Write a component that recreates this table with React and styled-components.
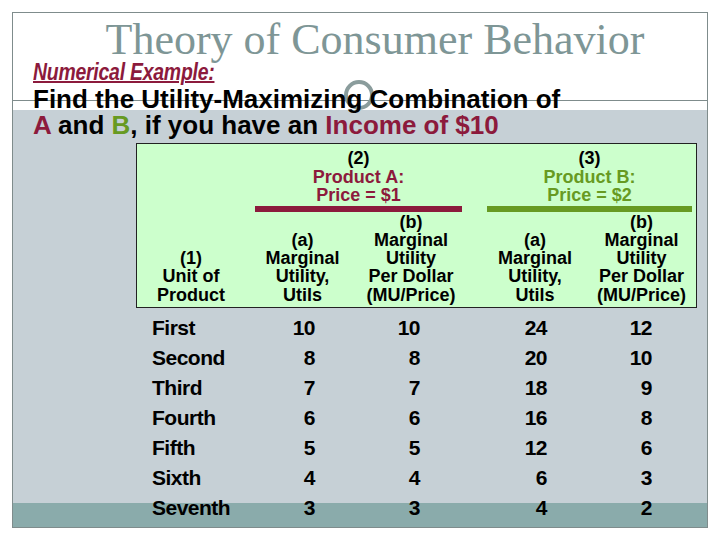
import styled, { createGlobalStyle } from 'styled-components';

const MAROON = '#8c1a3c';
const GREEN = '#679a22';

const rows = [
  ['First', 10, 10, 24, 12],
  ['Second', 8, 8, 20, 10],
  ['Third', 7, 7, 18, 9],
  ['Fourth', 6, 6, 16, 8],
  ['Fifth', 5, 5, 12, 6],
  ['Sixth', 4, 4, 6, 3],
  ['Seventh', 3, 3, 4, 2],
];

export default function App() {
  return (
    <>
      <Global />
      <Slide>
        <Ring />
        <Title>Theory of Consumer Behavior</Title>
        <HeadingRow>
          <Heading>Numerical Example:</Heading>
        </HeadingRow>
        <Intro>
          <Line>Find the Utility-Maximizing Combination of</Line>
          <Line>
            <Tint $color={MAROON}>A</Tint> and <Tint $color={GREEN}>B</Tint>, if you have an{' '}
            <Tint $color={MAROON}>Income of $10</Tint>
          </Line>
        </Intro>

        <Table>
          <HeaderBox>
            <UnitHead>
              (1)
              <br />
              Unit of
              <br />
              Product
            </UnitHead>
            <Group $col="2 / 4" $left={10} $right={0}>
              <span>(2)</span>
              <Tint $color={MAROON}>Product A:</Tint>
              <Tint $color={MAROON}>Price = $1</Tint>
              <Bar $color={MAROON} />
            </Group>
            <Group $col="5 / 7" $left={11} $right={-3}>
              <span>(3)</span>
              <Tint $color={GREEN}>Product B:</Tint>
              <Tint $color={GREEN}>Price = $2</Tint>
              <Bar $color={GREEN} />
            </Group>
            <ColHead $col={2}>
              (a)
              <br />
              Marginal
              <br />
              Utility,
              <br />
              Utils
            </ColHead>
            <ColHead $col={3}>
              (b)
              <br />
              Marginal
              <br />
              Utility
              <br />
              Per Dollar
              <br />
              (MU/Price)
            </ColHead>
            <ColHead $col={5}>
              (a)
              <br />
              Marginal
              <br />
              Utility,
              <br />
              Utils
            </ColHead>
            <ColHead $col={6}>
              (b)
              <br />
              Marginal
              <br />
              Utility
              <br />
              Per Dollar
              <br />
              (MU/Price)
            </ColHead>
          </HeaderBox>

          <Body>
            {rows.map(([label, ...nums]) => (
              <Row key={label}>
                <Label>{label}</Label>
                {nums.map((n, i) => (
                  <Num key={i}>{n}</Num>
                ))}
              </Row>
            ))}
          </Body>
        </Table>
      </Slide>
    </>
  );
}

const Global = createGlobalStyle`
  html, body {
    margin: 0;
    padding: 0;
    background: #fff;
  }
  body {
    font-family: "Liberation Sans", Arial, sans-serif;
  }
`;

const Slide = styled.div`
  position: relative;
  box-sizing: border-box;
  width: 696px;
  height: 516px;
  margin: 12px 0 0 12px;
  border: 1px solid #7f8c8c;
  overflow: hidden;
  background: linear-gradient(
    to bottom,
    #fff 0 87px,
    #7f8c8c 87px 88px,
    #fff 88px 97px,
    #c6d0d6 97px 490px,
    #8aabab 490px
  );
`;

const Ring = styled.div`
  position: absolute;
  left: 331px;
  top: 67px;
  width: 22px;
  height: 22px;
  border: 4px solid #8a9c9c;
  border-radius: 50%;
`;

const Title = styled.h1`
  margin: 0;
  padding: 6px 0 0 30px;
  height: 42px;
  text-align: center;
  font: 400 44px/42px "Liberation Serif", "Times New Roman", serif;
  color: #7e9696;
`;

const HeadingRow = styled.div`
  position: relative;
  height: 22px;
  margin: 0 0 3px 20px;
`;

const Heading = styled.span`
  display: inline-block;
  font: italic 700 24px/22px "Liberation Sans", Arial, sans-serif;
  letter-spacing: -0.3px;
  color: ${MAROON};
  text-decoration: underline;
  text-decoration-thickness: 2px;
  transform: scaleX(0.81);
  transform-origin: left center;
`;

const Intro = styled.div`
  position: relative;
  margin: 0 0 0 20px;
  font: 700 26px/26px "Liberation Sans", Arial, sans-serif;
  color: #000;
`;

const Line = styled.div`
  white-space: nowrap;
`;

const Tint = styled.span`
  color: ${(p) => p.$color};
`;

const Table = styled.div`
  margin: 5px 0 0 123px;
  width: 561px;
`;

const HeaderBox = styled.div`
  box-sizing: border-box;
  height: 165px;
  display: grid;
  grid-template-columns: 108px 115px 102px 14px 118px 95px;
  grid-template-rows: auto 1fr;
  padding: 5px 7px 3px 0;
  border: 1px solid #222;
  background: #ccffcc;
  font: 700 18px/18.3px "Liberation Sans", Arial, sans-serif;
  color: #000;
  text-align: center;
`;

const UnitHead = styled.div`
  grid-column: 1;
  grid-row: 1 / 3;
  align-self: end;
`;

const Group = styled.div`
  grid-column: ${(p) => p.$col};
  grid-row: 1;
  display: flex;
  flex-direction: column;
  margin-left: ${(p) => p.$left}px;
  margin-right: ${(p) => p.$right}px;
  line-height: 18.5px;
`;

const Bar = styled.div`
  height: 6px;
  margin-top: 1.5px;
  background: ${(p) => p.$color};
`;

const ColHead = styled.div`
  grid-column: ${(p) => p.$col};
  grid-row: 2;
  align-self: end;
  white-space: nowrap;
`;

const Body = styled.div`
  margin-top: 5px;
`;

const Row = styled.div`
  display: grid;
  grid-template-columns: 134px 45px 105px 127px 105px;
  height: 30px;
  align-items: center;
  font: 700 21px/30px "Liberation Sans", Arial, sans-serif;
  letter-spacing: -0.5px;
  color: #000;
`;

const Label = styled.div`
  padding-left: 16px;
`;

const Num = styled.div`
  text-align: right;
`;
